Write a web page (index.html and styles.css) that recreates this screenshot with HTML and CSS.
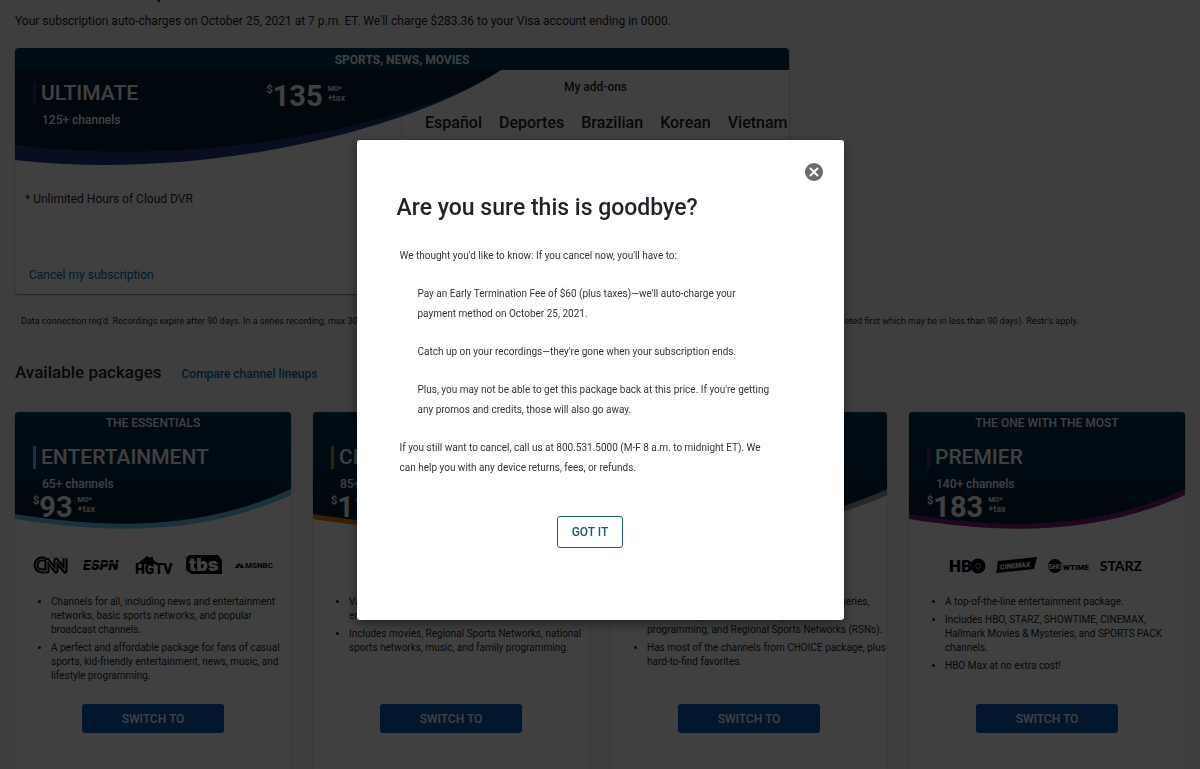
FILE: index.html
```html
<!DOCTYPE html>
<html lang="en">
<head>
    <meta charset="UTF-8">
    <meta name="viewport" content="width=device-width, initial-scale=1.0">
    <title>My TV package</title>
    <link rel="stylesheet" href="styles.css">
</head>
<body>
    <main class="page">
        <h1 class="page-title">Your TV subscription</h1>
        <p class="charge">Your subscription auto-charges on October 25, 2021 at 7 p.m. ET. We'll charge $283.36 to your Visa account ending in 0000.</p>

        <section class="current">
            <div class="band">SPORTS, NEWS, MOVIES</div>
            <div class="current-body">
                <svg class="swoosh" viewBox="0 0 774 96" preserveAspectRatio="none">
                    <path class="edge-ultimate" d="M0 0H486C400 58 190 112 0 90z"/>
                    <path class="fill-ultimate" d="M0 0H486C400 54 190 99 0 75z"/>
                </svg>
                <div class="current-plan">
                    <div class="current-head">
                        <div>
                            <h2 class="plan-name ultimate">ULTIMATE</h2>
                            <p class="channels">125+ channels</p>
                        </div>
                        <div class="price"><span class="dollar">$</span><span class="amount">135</span><span class="per">MO*<br><span class="tax">+tax</span></span></div>
                    </div>
                    <p class="dvr">* Unlimited Hours of Cloud DVR</p>
                    <a class="cancel" href="#">Cancel my subscription</a>
                </div>
                <div class="addons">
                    <h3 class="addons-title">My add-ons</h3>
                    <div class="addon-list">
                        <span>Español</span>
                        <span>Deportes</span>
                        <span>Brazilian</span>
                        <span>Korean</span>
                        <span>Vietnam</span>
                    </div>
                </div>
            </div>
        </section>

        <p class="legal">Data connection req'd. Recordings expire after 90 days. In a series recording, max 30 episodes are stored at one time, and then the oldest episodes will be removed from your cloud library (oldest episodes deleted first which may be in less than 90 days). Restr's apply.</p>

        <div class="available">
            <h2 class="available-title">Available packages</h2>
            <a class="compare" href="#">Compare channel lineups</a>
        </div>

        <section class="packages">
            <article class="card">
                <svg class="card-swoosh" viewBox="0 0 276 118" preserveAspectRatio="none">
                    <defs>
                        <linearGradient id="navy" x1="0" y1="0" x2="0" y2="1">
                            <stop offset="0" stop-color="#003450"/>
                            <stop offset=".3" stop-color="#003050"/>
                            <stop offset="1" stop-color="#001c34"/>
                        </linearGradient>
                    </defs>
                    <path class="edge-entertainment" d="M0 0H276V83C190 122 100 123 0 107z"/>
                    <path fill="url(#navy)" d="M0 0H276V77C190 117 100 118 0 102z"/>
                </svg>
                <div class="card-head">
                    <p class="tagline">THE ESSENTIALS</p>
                    <h3 class="plan-name entertainment">ENTERTAINMENT</h3>
                    <p class="channels">65+ channels</p>
                    <div class="price"><span class="dollar">$</span><span class="amount">93</span><span class="per">MO*<br><span class="tax">+tax</span></span></div>
                </div>
                <div class="logos">
                    <svg width="37" height="18" viewBox="0 0 37 18" aria-label="CNN">
                        <path class="cnn" d="M12 3H9a6 6 0 0 0 0 12h5V4l9 11V4l9 11V2"/>
                        <path class="cnn-line" d="M12 3H9a6 6 0 0 0 0 12h5V4l9 11V4l9 11V2"/>
                    </svg>
                    <svg width="38" height="18" viewBox="0 0 38 18" aria-label="ESPN">
                        <text class="espn" x="0" y="14">ESPN</text>
                        <path class="espn-cut" d="M0 7H38"/>
                    </svg>
                    <svg width="38" height="20" viewBox="0 0 38 20" aria-label="HGTV">
                        <path d="M2 9 12 1l3 2V2h3v3l7 4z"/>
                        <text class="hgtv" x="0" y="19">HGTV</text>
                    </svg>
                    <svg width="36" height="20" viewBox="0 0 36 20" aria-label="tbs">
                        <path d="M3 0H32L36 5V19H5L0 15V3z"/>
                        <text class="tbs" x="3" y="16">tbs</text>
                    </svg>
                    <svg width="38" height="18" viewBox="0 0 38 18" aria-label="MSNBC">
                        <path d="M0 12c1-3 3-2 4 0zM1 9c1-2 3-1 3 2zM4 10c-1-4 2-4 1 0zM5 11c0-3 3-4 3-2zM5 12c1-2 3-3 4 0z"/>
                        <text class="msnbc" x="10" y="12">MSNBC</text>
                    </svg>
                </div>
                <ul class="features">
                    <li>Channels for all, including news and entertainment<br>networks, basic sports networks, and popular<br>broadcast channels.</li>
                    <li>A perfect and affordable package for fans of casual<br>sports, kid-friendly entertainment, news, music, and<br>lifestyle programming.</li>
                </ul>
                <button class="switch" type="button">SWITCH TO</button>
            </article>

            <article class="card">
                <svg class="card-swoosh" viewBox="0 0 276 118" preserveAspectRatio="none">
                    <path class="edge-choice" d="M0 0H276V83C190 122 100 123 0 107z"/>
                    <path fill="url(#navy)" d="M0 0H276V77C190 117 100 118 0 102z"/>
                </svg>
                <div class="card-head">
                    <p class="tagline">MOST POPULAR</p>
                    <h3 class="plan-name choice">CHOICE</h3>
                    <p class="channels">85+ channels</p>
                    <div class="price"><span class="dollar">$</span><span class="amount">110</span><span class="per">MO*<br><span class="tax">+tax</span></span></div>
                </div>
                <div class="logos"></div>
                <ul class="features">
                    <li>Variety of sports, news, and family<br>entertainment.</li>
                    <li>Includes movies, Regional Sports Networks, national<br>sports networks, music, and family programming.</li>
                </ul>
                <button class="switch" type="button">SWITCH TO</button>
            </article>

            <article class="card">
                <svg class="card-swoosh" viewBox="0 0 276 118" preserveAspectRatio="none">
                    <path class="edge-xtra" d="M0 0H276V83C190 122 100 123 0 107z"/>
                    <path fill="url(#navy)" d="M0 0H276V77C190 117 100 118 0 102z"/>
                </svg>
                <div class="card-head">
                    <p class="tagline">MORE SPORTS</p>
                    <h3 class="plan-name xtra">XTRA</h3>
                    <p class="channels">105+ channels</p>
                    <div class="price"><span class="dollar">$</span><span class="amount">120</span><span class="per">MO*<br><span class="tax">+tax</span></span></div>
                </div>
                <div class="logos"></div>
                <ul class="features">
                    <li>For fans of movies, news, drama and hit TV series,<br>with more sports, music, family<br>programming, and Regional Sports Networks (RSNs).</li>
                    <li>Has most of the channels from CHOICE package, plus<br>hard-to-find favorites.</li>
                </ul>
                <button class="switch" type="button">SWITCH TO</button>
            </article>

            <article class="card">
                <svg class="card-swoosh" viewBox="0 0 276 118" preserveAspectRatio="none">
                    <path class="edge-premier" d="M0 0H276V83C190 122 100 123 0 107z"/>
                    <path fill="url(#navy)" d="M0 0H276V77C190 117 100 118 0 102z"/>
                </svg>
                <div class="card-head">
                    <p class="tagline">THE ONE WITH THE MOST</p>
                    <h3 class="plan-name premier">PREMIER</h3>
                    <p class="channels">140+ channels</p>
                    <div class="price"><span class="dollar">$</span><span class="amount">183</span><span class="per">MO*<br><span class="tax">+tax</span></span></div>
                </div>
                <div class="logos premium">
                    <svg width="37" height="18" viewBox="0 0 37 18" aria-label="HBO">
                        <text class="hbo" x="0" y="16">HB</text>
                        <circle cx="29" cy="10" r="5" class="hbo-ring"/>
                        <circle cx="29" cy="10" r="2"/>
                    </svg>
                    <svg width="41" height="18" viewBox="0 0 41 18" aria-label="CINEMAX">
                        <path d="M2 5 41 1 38 13 0 17z"/>
                        <text class="cinemax" x="4" y="12" transform="rotate(-5 20 9)">CINEMAX</text>
                    </svg>
                    <svg width="42" height="18" viewBox="0 0 42 18" aria-label="SHOWTIME">
                        <circle cx="8" cy="10" r="7"/>
                        <text class="sho" x="1" y="13">SHO</text>
                        <text class="wtime" x="16" y="14">WTIME</text>
                    </svg>
                    <span class="starz">STARZ</span>
                </div>
                <ul class="features">
                    <li>A top-of-the-line entertainment package.</li>
                    <li>Includes HBO, STARZ, SHOWTIME, CINEMAX,<br>Hallmark Movies &amp; Mysteries, and SPORTS PACK<br>channels.</li>
                    <li>HBO Max at no extra cost!</li>
                </ul>
                <button class="switch" type="button">SWITCH TO</button>
            </article>
        </section>
    </main>

    <div class="overlay">
        <div class="modal" role="dialog" aria-modal="true" aria-labelledby="modal-title">
            <button class="close" type="button" aria-label="Close">
                <svg width="18" height="18" viewBox="0 0 18 18">
                    <circle cx="9" cy="9" r="9"/>
                    <path d="M5 5l8 8M13 5l-8 8"/>
                </svg>
            </button>
            <h2 class="modal-title" id="modal-title">Are you sure this is goodbye?</h2>
            <div class="modal-text">
                <p>We thought you'd like to know: If you cancel now, you'll have to:</p>
                <p class="indent">Pay an Early Termination Fee of $60 (plus taxes)—we'll auto-charge your<br>payment method on October 25, 2021.</p>
                <p class="indent">Catch up on your recordings—they're gone when your subscription ends.</p>
                <p class="indent">Plus, you may not be able to get this package back at this price. If you're getting<br>any promos and credits, those will also go away.</p>
                <p>If you still want to cancel, call us at 800.531.5000 (M-F 8 a.m. to midnight ET). We<br>can help you with any device returns, fees, or refunds.</p>
            </div>
            <button class="got-it" type="button">GOT IT</button>
        </div>
    </div>
</body>
</html>
```
FILE: styles.css
```css
* {
    padding: 0;
    margin: 0;
    box-sizing: border-box;
}

body {
    font-family: Roboto, "Liberation Sans", sans-serif;
    color: #1d2329;
    background-color: #f8f8f8;
}
a {
    text-decoration: none;
    color: #0568ae;
}
button {
    font-family: inherit;
    cursor: pointer;
}

.page {
    display: flex;
    flex-direction: column;
    height: 100vh;
    padding: 0 15px;
    overflow: hidden;
}
.page-title {
    margin-top: -19px;
    font-size: 20px;
    line-height: 20px;
    font-weight: 500;
}
.charge {
    padding-top: 10px;
    font-size: 12px;
    line-height: 20px;
}

/* current package */
.current {
    width: 66%;
    min-width: 774px;
    height: 246px;
    margin-top: 17px;
    background-color: white;
    border-radius: 4px;
    box-shadow: 0 1px 2px rgba(0, 0, 0, 0.5);
    overflow: hidden;
    flex-shrink: 0;
}
.band {
    height: 22px;
    font-size: 12px;
    line-height: 24px;
    font-weight: 700;
    text-align: center;
    color: white;
    background-color: #003450;
}
.current-body {
    position: relative;
    display: flex;
    height: 224px;
}
.swoosh {
    position: absolute;
    left: 0;
    top: 0;
    width: 100%;
    height: 96px;
}
.edge-ultimate {
    fill: #1c3a7c;
}
.fill-ultimate {
    fill: #001c34;
}
.current-plan {
    display: flex;
    flex-direction: column;
    width: 50%;
    border-right: 1px solid #e8e8e8;
}
.current-head {
    position: relative;
    display: flex;
    justify-content: space-between;
    padding: 12px 56px 0 18px;
}
.dvr {
    padding: 60px 10px 0;
    font-size: 12px;
    line-height: 20px;
}
.cancel {
    margin-top: auto;
    padding: 0 14px 10px;
    font-size: 12px;
    line-height: 18px;
}
.addons {
    flex: 1;
    min-width: 0;
    padding-top: 7px;
}
.addons-title {
    font-size: 12px;
    line-height: 20px;
    font-weight: 500;
    text-align: center;
}
.addon-list {
    display: flex;
    gap: 17px;
    padding: 16px 0 0 23px;
    font-size: 16px;
    line-height: 20px;
    font-weight: 500;
}

.plan-name {
    padding-left: 5px;
    border-left: 3px solid;
    font-size: 21px;
    line-height: 23px;
    font-weight: 500;
}
.ultimate {
    border-color: #1c3a74;
}
.entertainment {
    border-color: #6cc4ec;
}
.choice {
    border-color: #e87c1c;
}
.xtra {
    border-color: #9c9c9c;
}
.premier {
    border-color: #7c1c7c;
}
.channels {
    padding: 6px 0 0 9px;
    font-size: 12px;
    line-height: 18px;
    font-weight: 500;
}
.current-head,
.card-head {
    color: white;
}
.price {
    display: flex;
    height: 26px;
}
.dollar {
    padding-top: 2px;
    font-size: 11px;
    line-height: 12px;
    font-weight: 700;
}
.amount {
    font-size: 29px;
    line-height: 28px;
    font-weight: 700;
}
.per {
    padding: 3px 0 0 5px;
    font-size: 7px;
    line-height: 8px;
    font-weight: 700;
}
.tax {
    font-size: 9px;
    line-height: 10px;
    font-weight: 500;
}

.legal {
    padding: 17px 6px 0;
    font-size: 9px;
    line-height: 20px;
    white-space: nowrap;
}
.available {
    display: flex;
    align-items: baseline;
    gap: 20px;
    padding-top: 29px;
}
.available-title {
    font-size: 17px;
    line-height: 24px;
    font-weight: 500;
}
.compare {
    font-size: 12px;
    font-weight: 500;
}

/* package cards */
.packages {
    display: grid;
    grid-template-columns: repeat(4, 1fr);
    gap: 22px;
    flex: 1;
    padding-top: 28px;
}
.card {
    position: relative;
    display: flex;
    flex-direction: column;
    align-items: center;
    background-color: white;
    border-radius: 4px 4px 0 0;
    box-shadow: 0 0 2px rgba(0, 0, 0, 0.3);
    overflow: hidden;
}
.card-swoosh {
    position: absolute;
    left: 0;
    top: 0;
    width: 100%;
    height: 118px;
}
.edge-entertainment {
    fill: #6cc4ec;
}
.edge-choice {
    fill: #e87c1c;
}
.edge-xtra {
    fill: #9c9c9c;
}
.edge-premier {
    fill: #7c1c7c;
}
.card-head {
    position: relative;
    width: 100%;
    height: 118px;
    padding-left: 18px;
}
.tagline {
    padding: 0 18px 12px 0;
    font-size: 12px;
    line-height: 22px;
    font-weight: 500;
    text-align: center;
}
.logos {
    display: flex;
    align-items: center;
    justify-content: space-between;
    width: 100%;
    height: 20px;
    margin-top: 25px;
    padding: 0 18px;
    flex-shrink: 0;
    color: black;
}
.premium {
    padding: 0 43px 0 40px;
}
.cnn {
    fill: none;
    stroke: black;
    stroke-width: 5;
    stroke-linejoin: round;
}
.cnn-line {
    fill: none;
    stroke: white;
    stroke-width: 1;
}
.espn {
    font: italic 900 13px Inter, sans-serif;
}
.espn-cut {
    stroke: white;
    stroke-width: 1;
}
.hgtv {
    font: 900 14px Roboto, sans-serif;
}
.tbs {
    font: 900 18px Inter, sans-serif;
    fill: white;
}
.msnbc {
    font: 700 8px Roboto, sans-serif;
}
.hbo {
    font: 900 17px Roboto, sans-serif;
}
.hbo-ring {
    fill: none;
    stroke: black;
    stroke-width: 5;
}
.cinemax {
    font: italic 900 7px Roboto, sans-serif;
    fill: white;
}
.sho {
    font: 900 7px Roboto, sans-serif;
    fill: white;
}
.wtime {
    font: 900 8px Roboto, sans-serif;
}
.starz {
    font: 700 14px Lato, sans-serif;
}
.features {
    width: 100%;
    height: 109px;
    margin-top: 20px;
    padding-left: 36px;
    font-size: 10px;
    line-height: 14px;
    white-space: nowrap;
}
.features li {
    margin-bottom: 4px;
}
.switch {
    width: 142px;
    height: 29px;
    font-size: 12px;
    font-weight: 500;
    color: white;
    background-color: #0a58b8;
    border: none;
    border-radius: 3px;
}

/* cancel dialog */
.overlay {
    position: fixed;
    inset: 0;
    display: flex;
    justify-content: center;
    align-items: flex-start;
    padding-top: 140px;
    background-color: rgba(0, 0, 0, 0.75);
}
.modal {
    display: flex;
    flex-direction: column;
    width: 487px;
    padding: 22px 60px 72px 40px;
    background-color: white;
    border-radius: 3px;
    box-shadow: 0 4px 12px rgba(0, 0, 0, 0.5);
}
.close {
    align-self: flex-end;
    width: 20px;
    height: 20px;
    margin-right: -40px;
    background: none;
    border: none;
}
.close svg {
    display: block;
    margin: 1px;
}
.close circle {
    fill: #6b6b6b;
}
.close path {
    stroke: white;
    stroke-width: 2;
}
.modal-title {
    padding-top: 10px;
    font-size: 23px;
    line-height: 32px;
    font-weight: 500;
}
.modal-text {
    display: flex;
    flex-direction: column;
    gap: 18px;
    padding: 22px 0 0 3px;
    font-size: 10px;
    line-height: 20px;
    color: #333;
    white-space: nowrap;
}
.indent {
    padding-left: 18px;
}
.got-it {
    align-self: center;
    width: 66px;
    height: 32px;
    margin-top: 38px;
    font-size: 12px;
    font-weight: 500;
    color: #1c5480;
    background-color: white;
    border: 1px solid #1c5480;
    border-radius: 3px;
}
```
